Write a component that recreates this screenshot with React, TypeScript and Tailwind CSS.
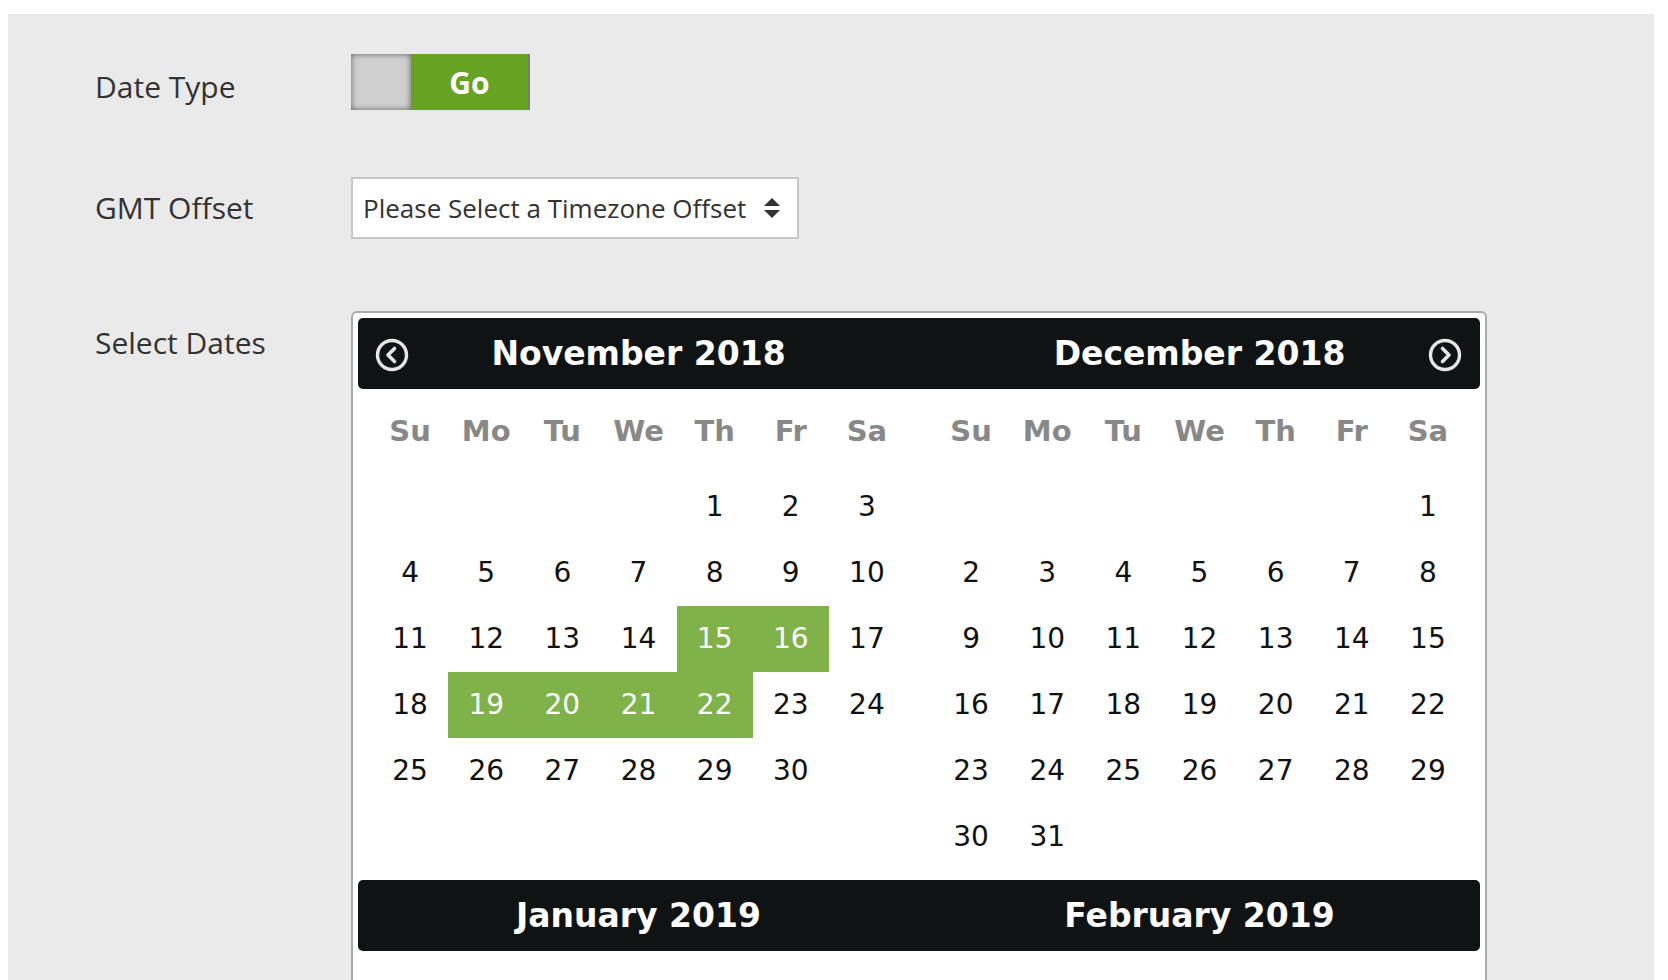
import React from "react";

const WEEKDAYS = ["Su", "Mo", "Tu", "We", "Th", "Fr", "Sa"];

interface MonthInfo {
    title: string,
    startDay: number,
    days: number,
    selected?: number[],
};

const monthRows = ({ startDay, days }: MonthInfo) => {
    const cells: (number | null)[] = [];
    for (let i = 0; i < startDay; i++) cells.push(null);
    for (let d = 1; d <= days; d++) cells.push(d);
    while (cells.length % 7 !== 0) cells.push(null);
    const rows: (number | null)[][] = [];
    for (let i = 0; i < cells.length; i += 7) rows.push(cells.slice(i, i + 7));
    return rows;
};

const ArrowCircle = ({ dir }: { dir: "left" | "right" }) => (
    <svg width="34" height="34" viewBox="0 0 34 34" fill="none">
        <circle cx="17" cy="17" r="14.5" stroke="#e6e6e6" strokeWidth="3.4" />
        {dir === "left"
            ? <path d="M19.5 10.5 L13 17 L19.5 23.5" stroke="#e6e6e6" strokeWidth="3.6" strokeLinecap="round" strokeLinejoin="round" />
            : <path d="M14.5 10.5 L21 17 L14.5 23.5" stroke="#e6e6e6" strokeWidth="3.6" strokeLinecap="round" strokeLinejoin="round" />}
    </svg>
);

const MonthGrid = ({ month }: { month: MonthInfo }) => {
    const rows = monthRows(month);
    return (
        <div className="w-[561px] px-[14px] pt-[10px] pb-[10px]">
            <div className="grid grid-cols-7 h-[66px] items-center">
                {WEEKDAYS.map((w) => (
                    <div key={w} className="text-center text-[29px] font-bold text-[#888888]">{w}</div>
                ))}
            </div>
            <div className="mt-[9px]">
                {rows.map((row, ri) => (
                    <div key={ri} className="grid grid-cols-7 h-[66px]">
                        {row.map((d, ci) => {
                            const sel = d !== null && month.selected?.includes(d);
                            return (
                                <div
                                    key={ci}
                                    className={
                                        sel
                                            ? "flex items-center justify-center text-[28px] bg-[#80b24a] text-white"
                                            : "flex items-center justify-center text-[28px] text-[#111111]"
                                    }
                                >
                                    {d ?? ""}
                                </div>
                            );
                        })}
                    </div>
                ))}
            </div>
        </div>
    );
};

const MonthPair = ({ left, right, nav }: { left: MonthInfo, right: MonthInfo, nav?: boolean }) => (
    <div>
        <div className="relative flex h-[71px] rounded-[5px] bg-[#0f1314]">
            {nav && (
                <div className="absolute left-[17px] top-[20px]"><ArrowCircle dir="left" /></div>
            )}
            <div className="w-[561px] flex items-center justify-center text-[33px] font-bold text-white">{left.title}</div>
            <div className="w-[561px] flex items-center justify-center text-[33px] font-bold text-white">{right.title}</div>
            {nav && (
                <div className="absolute right-[18px] top-[20px]"><ArrowCircle dir="right" /></div>
            )}
        </div>
        <div className="flex items-start">
            <MonthGrid month={left} />
            <MonthGrid month={right} />
        </div>
    </div>
);

const App = () => {
    const nov: MonthInfo = { title: "November 2018", startDay: 4, days: 30, selected: [15, 16, 19, 20, 21, 22] };
    const dec: MonthInfo = { title: "December 2018", startDay: 6, days: 31 };
    const jan: MonthInfo = { title: "January 2019", startDay: 2, days: 31 };
    const feb: MonthInfo = { title: "February 2019", startDay: 5, days: 28 };

    return (
        <div className="bg-white min-h-screen pt-[14px] pl-[8px]">
            <div className="w-[1646px] bg-[#eaeaea] pl-[87px] pt-[40px] pb-[40px] font-['Open_Sans',sans-serif]">
                {/* Date type */}
                <div className="flex">
                    <div className="w-[256px] pt-[13px] text-[30px] leading-[40px] text-[#333333]">Date Type</div>
                    <div className="flex h-[56px] w-[179px] border-r-2 border-[#7a7a7a]">
                        <div className="w-[60px] h-full bg-[#d0d0d0] shadow-[inset_0_0_6px_rgba(0,0,0,0.55)]" />
                        <div className="flex-1 h-full bg-[#67a323] flex items-center justify-center text-[30px] font-bold text-white">Go</div>
                    </div>
                </div>

                {/* GMT offset */}
                <div className="flex mt-[67px]">
                    <div className="w-[256px] pt-[11px] text-[30px] leading-[40px] text-[#333333]">GMT Offset</div>
                    <div className="flex items-center justify-between h-[62px] w-[448px] border-2 border-[#c6c6c6] bg-white pl-[10px] pr-[16px]">
                        <span className="text-[26px] text-[#333333]">Please Select a Timezone Offset</span>
                        <svg width="18" height="22" viewBox="0 0 18 22">
                            <path d="M9 1 L17 9 L1 9 Z" fill="#333333" />
                            <path d="M1 13 L17 13 L9 21 Z" fill="#333333" />
                        </svg>
                    </div>
                </div>

                {/* Calendar */}
                <div className="flex mt-[72px]">
                    <div className="w-[256px] pt-[12px] text-[30px] leading-[40px] text-[#333333]">Select Dates</div>
                    <div className="w-[1136px] rounded-[6px] border-2 border-[#aaaaaa] bg-white p-[5px] font-['DejaVu_Sans',sans-serif]">
                        <MonthPair left={nov} right={dec} nav />
                        <MonthPair left={jan} right={feb} />
                    </div>
                </div>
            </div>
        </div>
    );
};

export default App;
